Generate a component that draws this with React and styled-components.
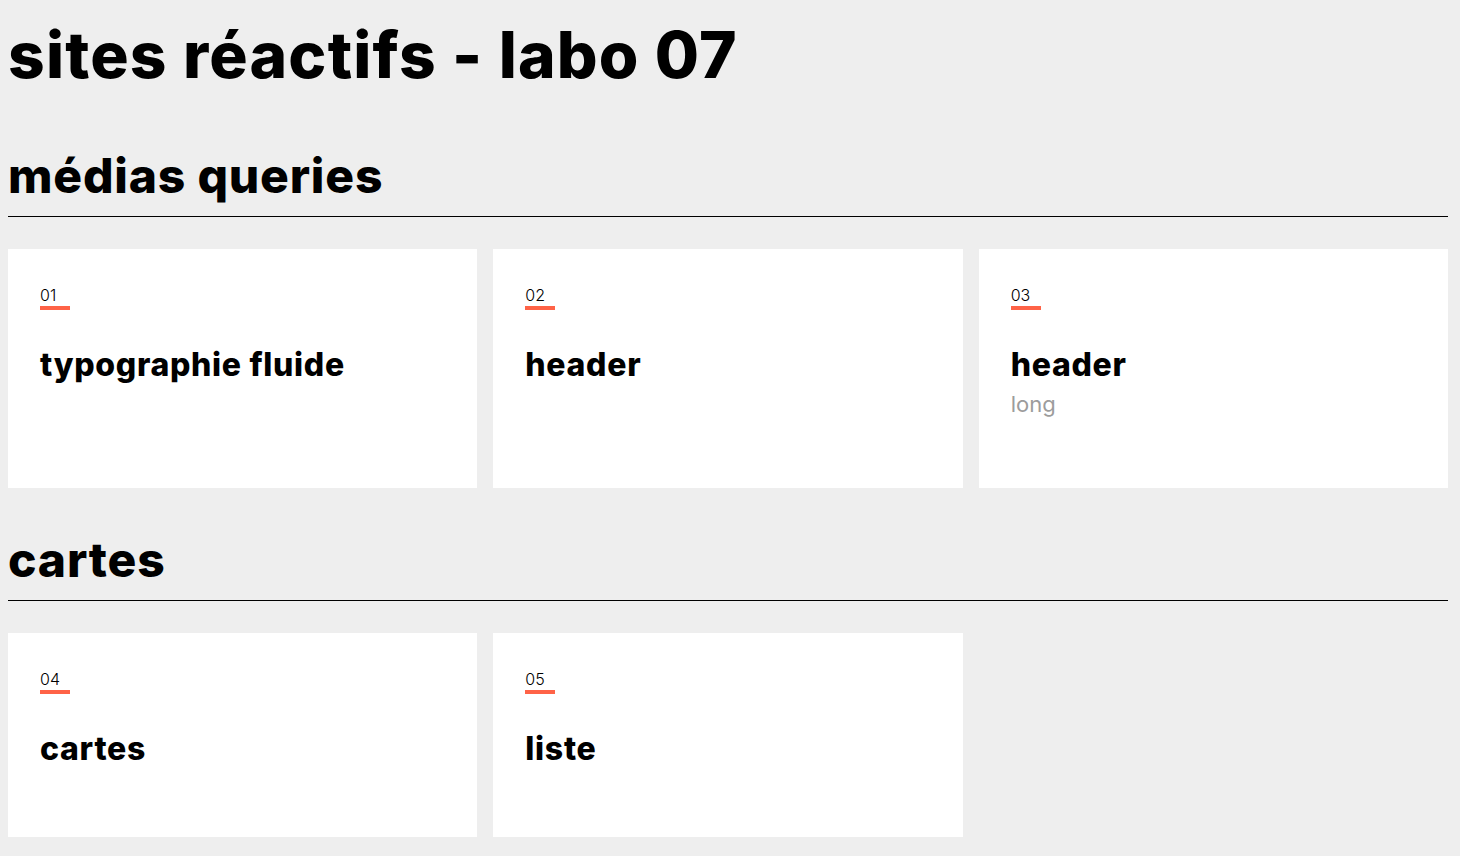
import styled, { createGlobalStyle } from "styled-components";

const GlobalStyle = createGlobalStyle`
  body {
    margin: 0;
    background: #eee;
    color: #000;
    font-family: Inter, "Noto Sans", sans-serif;
  }
`;

const Page = styled.main`
  padding: 17px 12px 20px 8px;
  box-sizing: border-box;
`;

const Title = styled.h1`
  margin: 0 0 53px;
  font-size: 64px;
  line-height: 1.2;
  font-weight: 800;
  letter-spacing: 1.2px;
`;

const Section = styled.section`
  margin-top: 43px;
`;

const SectionTitle = styled.h2`
  margin: 0 0 32px;
  padding-bottom: 12px;
  border-bottom: 1px solid #000;
  font-size: 48px;
  line-height: 1.2;
  font-weight: 800;
  letter-spacing: 0.8px;
`;

const Grid = styled.div`
  display: grid;
  grid-template-columns: repeat(3, 1fr);
  gap: 16px;
`;

const Card = styled.a`
  display: flex;
  flex-direction: column;
  align-items: flex-start;
  background: #fff;
  padding: 36px 32px 68px;
  color: inherit;
  text-decoration: none;
`;

const Num = styled.span`
  font-size: 16px;
  line-height: 20px;
  font-weight: 300;

  &::after {
    content: "";
    display: block;
    width: 30px;
    height: 4px;
    margin-top: 1px;
    background: #ff6347;
  }
`;

const CardTitle = styled.h3`
  margin: 36px 0 0;
  font-size: 32px;
  line-height: 1.2;
  font-weight: 800;
  letter-spacing: 0.7px;
`;

const Sub = styled.span`
  margin-top: 3px;
  font-size: 22px;
  line-height: 32px;
  color: #9c9c9c;
`;

const sections = [
  {
    title: "médias queries",
    items: [
      { num: "01", title: "typographie fluide" },
      { num: "02", title: "header" },
      { num: "03", title: "header", sub: "long" },
    ],
  },
  {
    title: "cartes",
    items: [
      { num: "04", title: "cartes" },
      { num: "05", title: "liste" },
    ],
  },
];

export default function App() {
  return (
    <Page>
      <GlobalStyle />
      <Title>sites réactifs - labo 07</Title>
      {sections.map((s) => (
        <Section key={s.title}>
          <SectionTitle>{s.title}</SectionTitle>
          <Grid>
            {s.items.map((it) => (
              <Card key={it.num} href="#">
                <Num>{it.num}</Num>
                <CardTitle>{it.title}</CardTitle>
                {it.sub && <Sub>{it.sub}</Sub>}
              </Card>
            ))}
          </Grid>
        </Section>
      ))}
    </Page>
  );
}
